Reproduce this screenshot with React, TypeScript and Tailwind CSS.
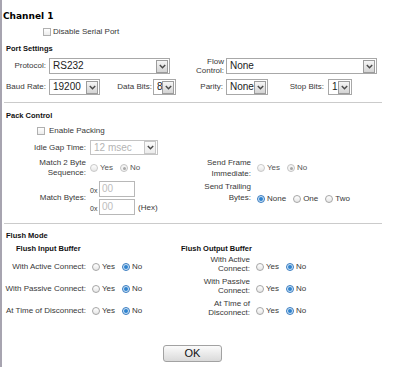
import React from "react";

function Chevron() {
  return (
    <svg width="7" height="5" viewBox="0 0 7 5">
      <path d="M0.8 0.9 L3.5 3.8 L6.2 0.9" fill="none" stroke="#4a4a4a" strokeWidth="1.4" />
    </svg>
  );
}

function Select({ cls, value, disabled }: { cls: string; value: string; disabled?: boolean }) {
  return (
    <div
      className={`${cls} h-[16px] flex items-center border ${
        disabled ? "border-[#c4c4c4]" : "border-[#a8a8a8]"
      } bg-white pl-[3px] pr-px`}
    >
      <span
        className={`flex-1 text-[10px] leading-[14px] whitespace-nowrap overflow-hidden ${
          disabled ? "text-[#b4b4b4]" : "text-[#222]"
        }`}
      >
        {value}
      </span>
      <span
        className={`w-[12px] h-[13px] border ${
          disabled ? "border-[#c8c8c8] from-[#fbfbfb] to-[#ececec]" : "border-[#9c9c9c] from-[#f6f6f6] to-[#d4d4d4]"
        } bg-gradient-to-b flex items-center justify-center`}
      >
        <Chevron />
      </span>
    </div>
  );
}

function Check() {
  return (
    <span className="inline-block w-[8px] h-[8px] border border-[#b0b0b0] bg-gradient-to-b from-white to-[#ececec]" />
  );
}

function Radio({ on, dis }: { on?: boolean; dis?: boolean }) {
  if (on && !dis)
    return (
      <span className="inline-flex items-center justify-center w-[8px] h-[8px] rounded-full border border-[#3a7cc0] bg-[#cfe4f6]">
        <span className="w-[4px] h-[4px] rounded-full bg-[#2f83cf]" />
      </span>
    );
  if (on && dis)
    return (
      <span className="inline-flex items-center justify-center w-[8px] h-[8px] rounded-full border border-[#c4c4c4] bg-[#f4f4f4]">
        <span className="w-[3px] h-[3px] rounded-full bg-[#a8a8a8]" />
      </span>
    );
  return (
    <span
      className={`inline-block w-[8px] h-[8px] rounded-full border ${
        dis ? "border-[#c8c8c8]" : "border-[#a6a6a6]"
      } bg-gradient-to-b from-white to-[#e6e6e6]`}
    />
  );
}

function Opt({ on, dis, label, last }: { on?: boolean; dis?: boolean; label: string; last?: boolean }) {
  return (
    <span className={`flex items-center ${last ? "" : "mr-[7px]"}`}>
      <Radio on={on} dis={dis} />
      <span className={`ml-[2px] ${dis ? "text-[#555]" : ""}`}>{label}</span>
    </span>
  );
}

function YesNo({ dis }: { dis?: boolean }) {
  return (
    <div className="flex items-center">
      <Opt dis={dis} label="Yes" />
      <Opt on dis={dis} label="No" last />
    </div>
  );
}

function Hex({ hex }: { hex?: boolean }) {
  return (
    <div className="flex items-center h-[16px]">
      <span className="w-[9px] text-[7px] leading-[8px] mt-[3px]">0x</span>
      <div className="w-[36px] h-[16px] border border-[#b8b8b8] bg-white pl-[2px] text-[10px] leading-[14px] text-[#bdbdbd]">
        00
      </div>
      {hex && <span className="ml-[3px] mt-[2px]">(Hex)</span>}
    </div>
  );
}

export default function App() {
  const head = "font-bold text-[7.5px] leading-[10px] text-[#111] h-[10px]";
  return (
    <div className="w-[400px] h-[367px] bg-white border-l-2 border-[#a7a4b0] font-['Liberation_Sans',Arial,sans-serif] text-[8px] leading-[10px] text-[#383838] overflow-hidden">
      <div className="pt-[10px] pl-[1px] font-['DejaVu_Sans',sans-serif] font-bold text-[9px] leading-[12px] text-black">
        Channel 1
      </div>
      <div className="mt-[5px] h-[10px] flex items-center pl-[41px]">
        <Check />
        <span className="ml-[2px]">Disable Serial Port</span>
      </div>

      <div className={`mt-[7px] pl-[4px] ${head}`}>Port Settings</div>
      <div className="mt-[4px] h-[16px] flex items-center">
        <div className="w-[44px] text-right">Protocol:</div>
        <Select cls="ml-[3px] w-[121px]" value="RS232" />
        <div className="w-[54px] text-right leading-[9px]">
          Flow
          <br />
          Control:
        </div>
        <Select cls="ml-[2px] w-[151px]" value="None" />
      </div>
      <div className="mt-[5px] h-[16px] flex items-center">
        <div className="w-[44px] text-right">Baud Rate:</div>
        <Select cls="ml-[3px] w-[51px]" value="19200" />
        <div className="w-[52px] text-right">Data Bits:</div>
        <Select cls="ml-[1px] w-[23px]" value="8" />
        <div className="w-[47px] text-right">Parity:</div>
        <Select cls="ml-[3px] w-[42px]" value="None" />
        <div className="w-[56px] text-right">Stop Bits:</div>
        <Select cls="ml-[4px] w-[24px]" value="1" />
      </div>
      <div className="mt-[7px] ml-[2px] w-[378px] h-px bg-[#cbcbcb]" />

      <div className={`mt-[8px] pl-[4px] ${head}`}>Pack Control</div>
      <div className="mt-[5px] h-[10px] flex items-center pl-[35px]">
        <Check />
        <span className="ml-[4px]">Enable Packing</span>
      </div>
      <div className="mt-[4px] h-[15px] flex items-center">
        <div className="w-[84px] text-right">Idle Gap Time:</div>
        <Select cls="ml-[4px] w-[68px] !h-[15px]" value="12 msec" disabled />
      </div>
      <div className="mt-[3px] flex">
        <div className="w-[168px]">
          <div className="h-[20px] flex items-center">
            <div className="w-[84px] text-right">
              Match 2 Byte
              <br />
              Sequence:
            </div>
            <div className="ml-[4px]">
              <YesNo dis />
            </div>
          </div>
          <div className="mt-[3px] flex items-center">
            <div className="w-[84px] text-right">Match Bytes:</div>
            <div className="ml-[4px] flex flex-col gap-[2px]">
              <Hex />
              <Hex hex />
            </div>
          </div>
        </div>
        <div>
          <div className="h-[20px] flex items-center">
            <div className="w-[81px] text-right leading-[11px]">
              Send Frame
              <br />
              Immediate:
            </div>
            <div className="ml-[6px]">
              <YesNo dis />
            </div>
          </div>
          <div className="mt-[3px] h-[34px] flex items-start">
            <div className="w-[81px] text-right leading-[11px]">
              Send Trailing
              <br />
              Bytes:
            </div>
            <div className="ml-[6px] mt-[13px] h-[10px] flex items-center">
              <Opt on label="None" />
              <Opt label="One" />
              <Opt label="Two" last />
            </div>
          </div>
        </div>
      </div>
      <div className="mt-[8px] ml-[2px] w-[378px] h-px bg-[#cbcbcb]" />

      <div className={`mt-[7px] pl-[4px] ${head}`}>Flush Mode</div>
      <div className="mt-[3px] flex">
        <div className={`w-[179px] pl-[14px] ${head}`}>Flush Input Buffer</div>
        <div className={head}>Flush Output Buffer</div>
      </div>
      <div className="mt-[2px]">
        {[
          ["With Active Connect:", "With Active", "Connect:"],
          ["With Passive Connect:", "With Passive", "Connect:"],
          ["At Time of Disconnect:", "At Time of", "Disconnect:"],
        ].map(([l, r1, r2]) => (
          <div key={l} className="h-[22px] flex items-center">
            <div className="w-[168px] flex items-center">
              <div className="w-[84px] text-right whitespace-nowrap">{l}</div>
              <div className="ml-[6px]">
                <YesNo />
              </div>
            </div>
            <div className="flex items-center">
              <div className="w-[80px] text-right leading-[9px] mb-[6px]">
                {r1}
                <br />
                {r2}
              </div>
              <div className="ml-[6px]">
                <YesNo />
              </div>
            </div>
          </div>
        ))}
      </div>
      <button className="mt-[23px] ml-[161px] w-[59px] h-[17px] rounded-[3px] border border-[#a2a2a2] bg-gradient-to-b from-[#fbfbfb] to-[#dadada] text-[11px] leading-[15px] text-[#111] block">
        OK
      </button>
    </div>
  );
}
